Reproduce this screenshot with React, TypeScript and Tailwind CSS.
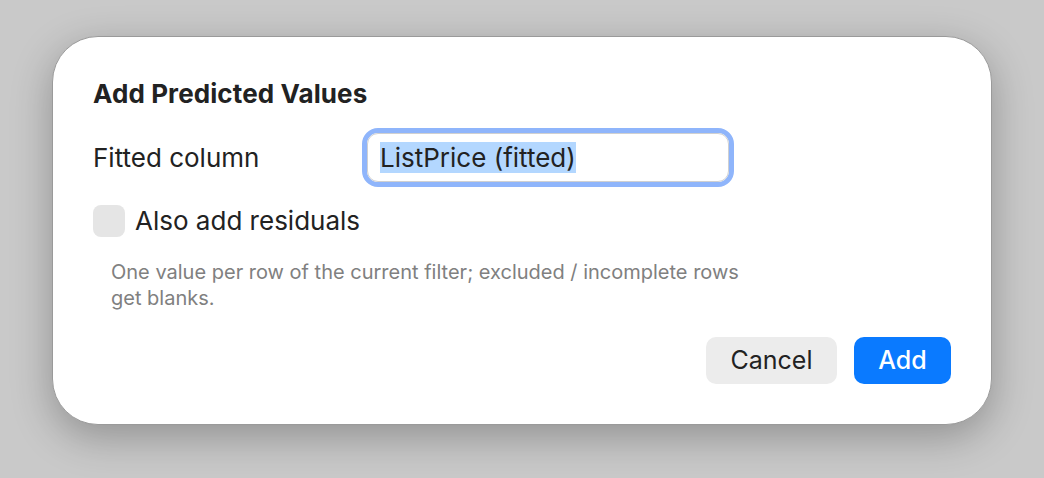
import React from "react";

export default function App() {
  return (
    <div
      className="w-[1044px] h-[478px] bg-[#c9c9c9] pt-[36px] pl-[52px] overflow-hidden"
      style={{ fontFamily: "Inter, 'Noto Sans', sans-serif" }}
    >
      <div className="w-[940px] h-[389px] bg-white rounded-[46px] border border-[#9a9a9a] shadow-[0_12px_40px_rgba(0,0,0,0.28)] pl-[40px] pr-[40px] pt-[41px] flex flex-col">
        <div className="text-[26px] font-bold text-[#222] leading-[32px] tracking-[0.1px]">
          Add Predicted Values
        </div>
        <div className="flex items-center mt-[18px]">
          <div className="w-[269px] text-[26px] text-[#222] leading-[32px]">Fitted column</div>
          <div className="w-[372px] h-[59px] rounded-[16px] border-[5px] border-[#8fb5fb] flex items-center">
            <div className="w-full h-full rounded-[11px] border border-[#d0d0d0] bg-white flex items-center pl-[12px]">
              <span className="bg-[#b3d7ff] text-[26px] text-[#222] leading-[31px]">ListPrice (fitted)</span>
            </div>
          </div>
        </div>
        <div className="flex items-center mt-[18px] gap-[10px]">
          <div className="w-[32px] h-[32px] rounded-[8px] bg-[#e5e5e5]" />
          <div className="text-[26px] text-[#222] leading-[32px]">Also add residuals</div>
        </div>
        <div className="ml-[18px] mt-[22px] text-[20px] leading-[26px] text-[#808080] w-[645px]">
          One value per row of the current filter; excluded / incomplete rows get blanks.
        </div>
        <div className="flex justify-end gap-[17px] mt-[26px] pr-0">
          <button className="w-[131px] h-[47px] rounded-[10px] bg-[#ececec] text-[25px] text-[#222]">
            Cancel
          </button>
          <button className="w-[97px] h-[47px] rounded-[10px] bg-[#0a7aff] text-[25px] text-white font-medium">
            Add
          </button>
        </div>
      </div>
    </div>
  );
}
